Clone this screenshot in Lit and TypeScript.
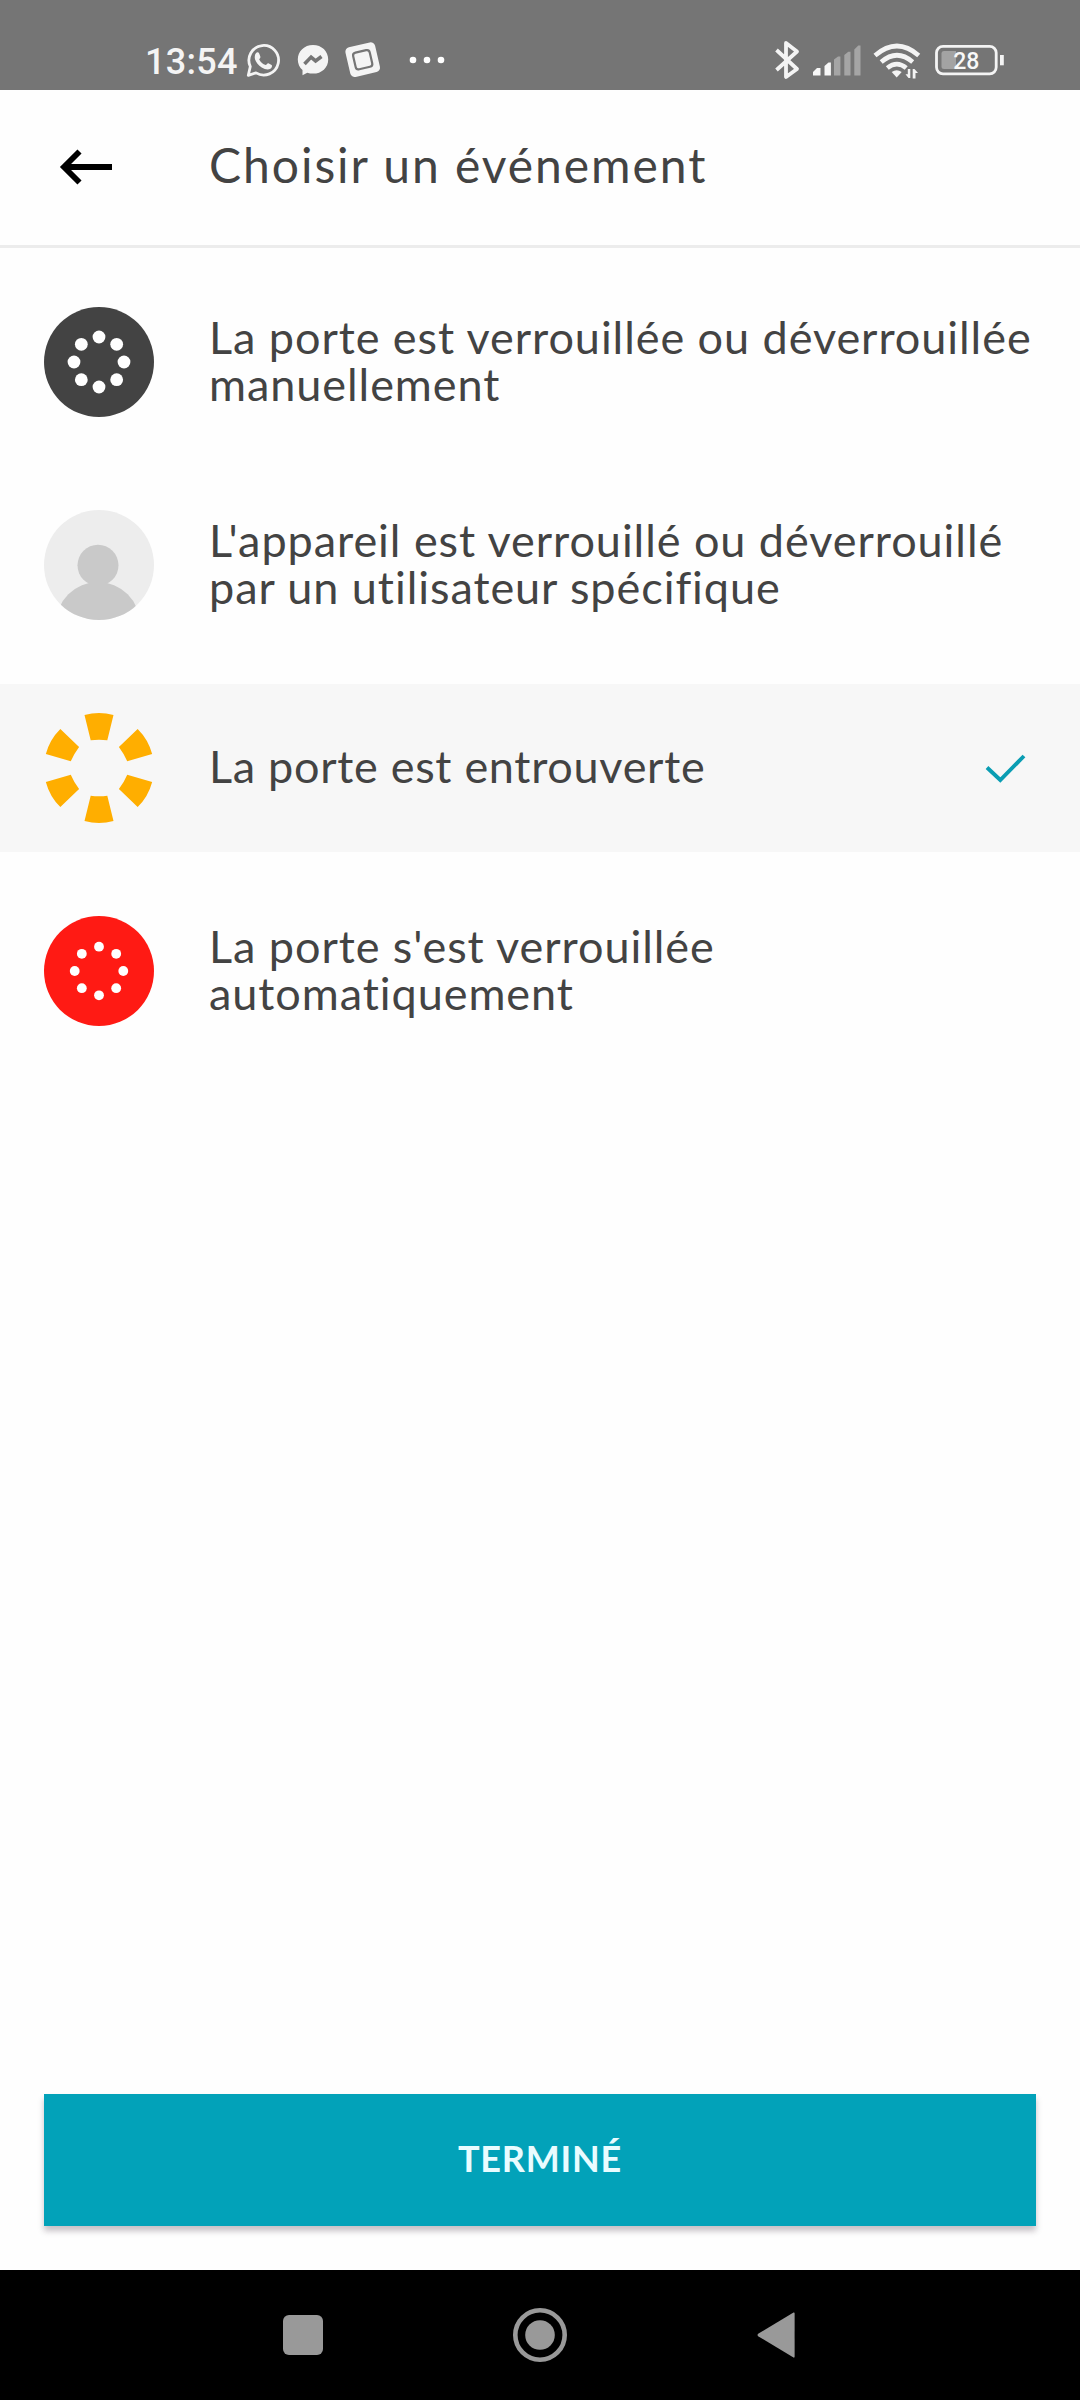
import { LitElement, html, css, svg } from "lit";
import { customElement, property } from "lit/decorators.js";
import { classMap } from "lit/directives/class-map.js";

type IconKind = "manual" | "user" | "ajar" | "auto";

interface EventOption {
  icon: IconKind;
  label: string;
  selected?: boolean;
}

const OPTIONS: EventOption[] = [
  { icon: "manual", label: "La porte est verrouillée ou déverrouillée manuellement" },
  { icon: "user", label: "L'appareil est verrouillé ou déverrouillé par un utilisateur spécifique" },
  { icon: "ajar", label: "La porte est entrouverte", selected: true },
  { icon: "auto", label: "La porte s'est verrouillée automatiquement" },
];

const ring = (radius: number, dot: number) =>
  [0, 45, 90, 135, 180, 225, 270, 315].map(
    (a) => svg`<circle cx="0" cy=${-radius} r=${dot} fill="#fff" transform="rotate(${a})"></circle>`
  );

@customElement("status-bar")
export class StatusBar extends LitElement {
  static styles = css`
    :host {
      display: flex;
      align-items: flex-start;
      justify-content: space-between;
      height: 90px;
      box-sizing: border-box;
      padding: 40px 75px 0 145px;
      background: #757575;
      color: #f4f4f4;
      font-family: Roboto, sans-serif;
    }
    .group { display: flex; height: 40px; }
    .time { width: 100px; font-size: 36px; font-weight: 500; line-height: 44px; letter-spacing: 0.3px; white-space: nowrap; }
    svg { display: block; flex: none; }
    .level { font: 500 23px Roboto, sans-serif; }
  `;
  render() {
    return html`
      <div class="group">
        <span class="time">13:54</span>
        <svg width="205" height="40" viewBox="245 40 205 40">
          <path d="M248.300 75.300 L250.300 66.500 A14.800 14.800 0 1 1 256 72.900 Z" fill="none" stroke="#f4f4f4" stroke-width="2.800" stroke-linejoin="round"></path>
          <path d="M255.700 53.500 c1.500-2 3-1.500 3.700 .500 l1 2.700 c.300 1-.900 1.800-1.200 2.700 c1.600 2.900 3.600 4.600 6.500 5.700 c1-.500 1.700-2.200 2.700-1.900 l3.200 1.700 c1 .700 .200 3-1.200 3.900 c-2.300 1.500-5.400 .800-8.700-1.200 c-3.200-2-5.800-5.300-6.600-8 c-.600-2.400-.500-4.400 .600-6.100z" fill="#f4f4f4"></path>
          <path d="M313 45 c-8.700 0-15.200 6.300-15.200 14.400 c0 4.300 1.800 8 4.700 10.600 v5.300 l4.800-2.600 c1.800 .600 3.700 .900 5.700 .900 c8.700 0 15.200-6 15.200-14.200 S321.700 45 313 45z" fill="#f4f4f4"></path>
          <path d="M304.500 64 l6.600-6.900 4.500 3.800 5.900-4.400" fill="none" stroke="#757575" stroke-width="3.600"></path>
          <g transform="translate(362.700 59.700) rotate(-13)">
            <rect x="-15.200" y="-15.200" width="30.400" height="30.400" rx="4.500" fill="#f4f4f4"></rect>
            <rect x="-8.500" y="-8.500" width="17" height="17" rx="3" fill="#f4f4f4" stroke="#757575" stroke-width="2.200"></rect>
          </g>
          <circle cx="413" cy="60" r="3.300" fill="#fff"></circle>
          <circle cx="427" cy="60" r="3.300" fill="#fff"></circle>
          <circle cx="441" cy="60" r="3.300" fill="#fff"></circle>
        </svg>
      </div>
      <div class="group">
        <svg width="235" height="40" viewBox="770 40 235 40">
          <path d="M776.500 50 L797 69 L786 77 V43 L797 51.500 L776.500 70" fill="none" stroke="#f4f4f4" stroke-width="3.800" stroke-linejoin="round"></path>
          <path d="M813 75.500 v-3.500 l4-4 h3.500 v7.500z M824.500 75.500 v-9.500 l4-3.500 h2.400 v13z" fill="#f8f8f8"></path>
          <path d="M834 75.500 V59.500 l4-3 h2.400 v19z M844.300 75.500 V55 l4-3.300 h2.200 v23.800z M854.300 75.500 V49.500 l4-4 h2.200 v30z" fill="#a5a5a5"></path>
          <g fill="none" stroke="#f4f4f4" stroke-width="4.600">
            <path d="M875 55.500 Q897 36.500 918.700 55.500"></path>
            <path d="M881.200 62 Q897 48.500 912.700 62"></path>
            <path d="M887.300 68 Q897 60.200 906.200 68"></path>
          </g>
          <path d="M891.700 72 Q896.700 68.300 901.700 72 L896.700 77.500z" fill="#f4f4f4"></path>
          <path d="M910.300 69 v9 h-1.800 l-3-3.700 h2.300 v-5.300z M912.700 78.500 v-9.500 h1.800 l3.500 4 h-2.500 v5.500z" fill="#f4f4f4"></path>
          <rect x="936.500" y="46.300" width="59.700" height="27.500" rx="6.500" fill="none" stroke="#f4f4f4" stroke-width="2.800"></rect>
          <path d="M944 51 h12 v18 h-12 q-2.500 0-2.500-2.500 v-13 q0-2.500 2.500-2.500z" fill="#a3a3a3"></path>
          <rect x="1000" y="55" width="3.800" height="10.300" fill="#f4f4f4"></rect>
          <text class="level" x="966.300" y="69.300" text-anchor="middle" fill="#f8f8f8">28</text>
        </svg>
      </div>
    `;
  }
}

@customElement("event-row")
export class EventRow extends LitElement {
  @property({ attribute: false }) option!: EventOption;

  static styles = css`
    :host { display: block; }
    .row {
      display: flex;
      align-items: center;
      height: 168px;
      box-sizing: border-box;
      padding: 0 44px;
    }
    .selected { background: #f7f7f7; }
    svg { display: block; flex: none; }
    .label {
      flex: 1;
      margin: 0 0 3px 55px;
      font-size: 45px;
      line-height: 47px;
      letter-spacing: 0.94px;
    }
    .selected .label { letter-spacing: 0.7px; }
  `;

  private icon() {
    switch (this.option.icon) {
      case "manual":
        return svg`<circle r="55" fill="#434343"></circle>${ring(25, 6.4)}`;
      case "user":
        return svg`
          <clipPath id="disc"><circle r="55"></circle></clipPath>
          <circle r="55" fill="#ededed"></circle>
          <g clip-path="url(#disc)" fill="#c9c9c9">
            <circle cx="-1" cy="0.300" r="20.500"></circle>
            <circle cx="-1" cy="59" r="42"></circle>
          </g>`;
      case "ajar":
        return [0, 60, 120, 180, 240, 300].map(
          (a) => svg`<path d="M-14.500 -53 A55 55 0 0 1 14.500 -53 L8.300 -27.800 Q0 -28.800 -8.300 -27.800 Z" fill="#ffae00" transform="rotate(${a})"></path>`
        );
      default:
        return svg`<circle r="55" fill="#ff1a14"></circle>${ring(24.3, 4.9)}`;
    }
  }

  render() {
    const { label, selected } = this.option;
    return html`
      <div class=${classMap({ row: true, selected: !!selected })}>
        <svg width="110" height="110" viewBox="-55 -55 110 110">${this.icon()}</svg>
        <div class="label">${label}</div>
        ${selected
          ? html`<svg width="56" height="44" viewBox="980 746 56 44">
              <path d="M987 767.500 L1000.300 780 L1024 756" fill="none" stroke="#0a9db3" stroke-width="3.900"></path>
            </svg>`
          : ""}
      </div>
    `;
  }
}

@customElement("app-root")
export class AppRoot extends LitElement {
  static styles = css`
    :host {
      display: flex;
      flex-direction: column;
      width: 1080px;
      height: 2400px;
      background: #fefefe;
      color: #434343;
      font-family: Lato, "Open Sans", sans-serif;
    }
    header {
      display: flex;
      align-items: center;
      height: 158px;
      box-sizing: border-box;
      padding: 0 0 1px 56px;
      border-bottom: 3px solid #ececec;
    }
    svg { display: block; flex: none; }
    h1 {
      margin: 0 0 4px 93px;
      font-size: 48px;
      font-weight: 400;
      line-height: 54px;
      letter-spacing: 1.95px;
      white-space: nowrap;
    }
    main {
      flex: 1;
      display: flex;
      flex-direction: column;
      gap: 35px;
      padding-top: 30px;
    }
    footer { padding: 0 44px 44px; }
    button {
      display: block;
      width: 100%;
      height: 132px;
      padding: 0 0 4px;
      border: 0;
      background: #02a2b9;
      color: #e9fcff;
      font: 700 36px/44px Lato, "Open Sans", sans-serif;
      letter-spacing: 0.8px;
      box-shadow: 0 5px 6px rgba(40, 20, 40, 0.26);
    }
    nav {
      display: flex;
      align-items: center;
      justify-content: center;
      gap: 183px;
      height: 130px;
      background: #000;
    }
  `;

  render() {
    return html`
      <status-bar></status-bar>
      <header>
        <svg width="60" height="44" viewBox="56 145 60 44">
          <path d="M112 167 H64 M79.500 151.500 L64 167 L79.500 182.500" fill="none" stroke="#000" stroke-width="5.800"></path>
        </svg>
        <h1>Choisir un événement</h1>
      </header>
      <main>${OPTIONS.map((o) => html`<event-row .option=${o}></event-row>`)}</main>
      <footer><button>TERMINÉ</button></footer>
      <nav>
        <svg width="54" height="54" viewBox="0 0 54 54"><rect x="7" y="7" width="40" height="40" rx="6" fill="#999"></rect></svg>
        <svg width="54" height="54" viewBox="0 0 54 54">
          <circle cx="27" cy="27" r="24.700" fill="none" stroke="#999" stroke-width="4.600"></circle>
          <circle cx="27" cy="27" r="14.800" fill="#999"></circle>
        </svg>
        <svg width="54" height="54" viewBox="0 0 54 54">
          <path d="M8.500 25.500 L43.500 4.500 Q44.600 4 44.600 5.500 V48.500 Q44.600 50 43.500 49.500 L8.500 28.500 Q6.500 27 8.500 25.500z" fill="#999"></path>
        </svg>
      </nav>
    `;
  }
}
